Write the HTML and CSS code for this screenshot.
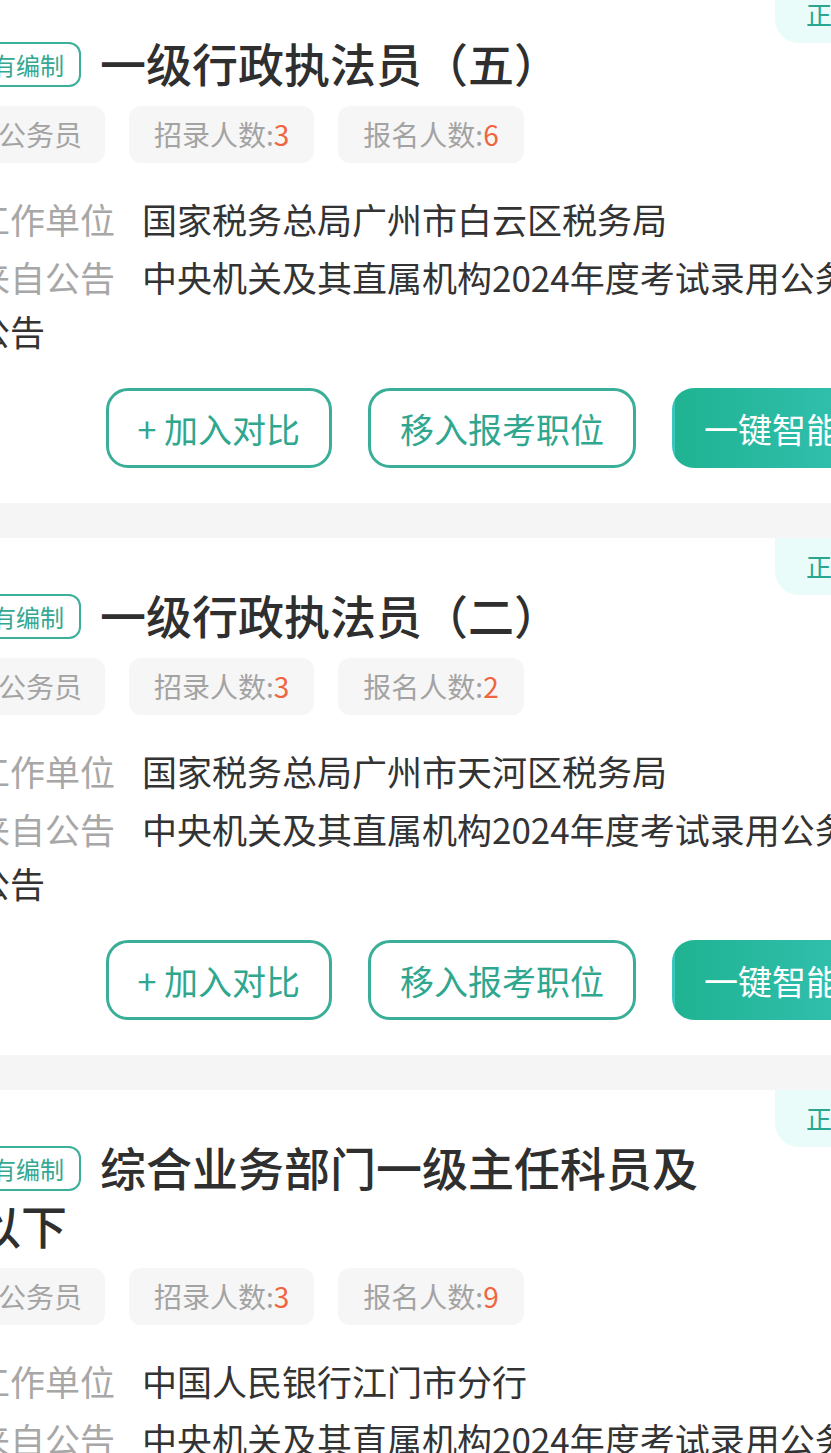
FILE: index.html
```html
<!DOCTYPE html>
<html>
<head>
  <meta charset="utf-8">
  <link rel="stylesheet" href="styles.css">
</head>
<body>

<div class="list">

  <div class="card">
    <div class="status">正在报名</div>
    <h3 class="title"><span class="tag">有编制</span>一级行政执法员（五）</h3>
    <div class="chips">
      <span class="chip">公务员</span>
      <span class="chip">招录人数:<em>3</em></span>
      <span class="chip">报名人数:<em>6</em></span>
    </div>
    <p class="meta"><span class="label">工作单位</span>国家税务总局广州市白云区税务局</p>
    <p class="meta"><span class="label">来自公告</span>中央机关及其直属机构2024年度考试录用公务员公告</p>
    <div class="actions">
      <button class="btn">+ 加入对比</button>
      <button class="btn">移入报考职位</button>
      <button class="btn primary">一键智能填报</button>
    </div>
  </div>

  <div class="card">
    <div class="status">正在报名</div>
    <h3 class="title"><span class="tag">有编制</span>一级行政执法员（二）</h3>
    <div class="chips">
      <span class="chip">公务员</span>
      <span class="chip">招录人数:<em>3</em></span>
      <span class="chip">报名人数:<em>2</em></span>
    </div>
    <p class="meta"><span class="label">工作单位</span>国家税务总局广州市天河区税务局</p>
    <p class="meta"><span class="label">来自公告</span>中央机关及其直属机构2024年度考试录用公务员公告</p>
    <div class="actions">
      <button class="btn">+ 加入对比</button>
      <button class="btn">移入报考职位</button>
      <button class="btn primary">一键智能填报</button>
    </div>
  </div>

  <div class="card">
    <div class="status">正在报名</div>
    <h3 class="title"><span class="tag">有编制</span>综合业务部门一级主任科员及以下</h3>
    <div class="chips">
      <span class="chip">公务员</span>
      <span class="chip">招录人数:<em>3</em></span>
      <span class="chip">报名人数:<em>9</em></span>
    </div>
    <p class="meta"><span class="label">工作单位</span>中国人民银行江门市分行</p>
    <p class="meta"><span class="label">来自公告</span>中央机关及其直属机构2024年度考试录用公务员公告</p>
    <div class="actions">
      <button class="btn">+ 加入对比</button>
      <button class="btn">移入报考职位</button>
      <button class="btn primary">一键智能填报</button>
    </div>
  </div>

</div>

</body>
</html>
```

FILE: styles.css
```css
* {
  box-sizing: border-box;
}

html, body {
  overflow: hidden;
}

body {
  margin: 0;
  background: #f5f5f5;
  font-family: "Noto Sans CJK SC", "Noto Sans", sans-serif;
  color: #333;
}

.list {
  margin-top: -14px;
}

/* card is wider than the screen, the view is a crop */
.card {
  position: relative;
  width: 1025px;
  margin: 0 0 35px -55px;
  padding: 47px 30px 35px;
  background: #fff;
}

.status {
  position: absolute;
  top: 0;
  right: 0;
  height: 57px;
  line-height: 55px;
  padding: 0 60px 0 31px;
  background: #eafcfa;
  border-bottom-left-radius: 24px;
  color: #2ba68e;
  font-size: 26px;
}

.title {
  margin: 0;
  padding-right: 220px;
  font-size: 46px;
  line-height: 58px;
  font-weight: 500;
  color: #2f2f2f;
}

.tag {
  display: inline-block;
  height: 45px;
  line-height: 41px;
  margin: 9px 19px 0 0;
  padding: 0 15px;
  border: 2px solid #3aaf99;
  border-radius: 12px;
  color: #34a892;
  font-size: 24px;
  font-weight: 400;
  vertical-align: top;
}

.chips {
  display: flex;
  gap: 24px;
  margin-top: 15px;
}

.chip {
  height: 57px;
  line-height: 57px;
  padding: 0 25px;
  background: #f6f6f6;
  border-radius: 12px;
  color: #a3a3a3;
  font-size: 28px;
}

.chip:first-child {
  padding: 0 23px;
}

.chip em {
  font-style: normal;
  color: #f0653e;
}

.meta {
  margin: 4px 40px 0 0;
  font-size: 35px;
  line-height: 54px;
  color: #333;
}

.chips + .meta {
  margin-top: 29px;
}

.label {
  margin-right: 27px;
  color: #a7a7a7;
}

.actions {
  display: flex;
  justify-content: flex-end;
  gap: 36px;
  margin-top: 30px;
}

.btn {
  height: 80px;
  padding: 0 29px;
  border: 3px solid #3aae98;
  border-radius: 22px;
  background: #fff;
  color: #2fa78f;
  font-family: inherit;
  font-size: 34px;
  white-space: nowrap;
}

.btn.primary {
  border-color: transparent;
  background: linear-gradient(90deg, #1fb392, #3bc6bd);
  color: #fff;
}
```
